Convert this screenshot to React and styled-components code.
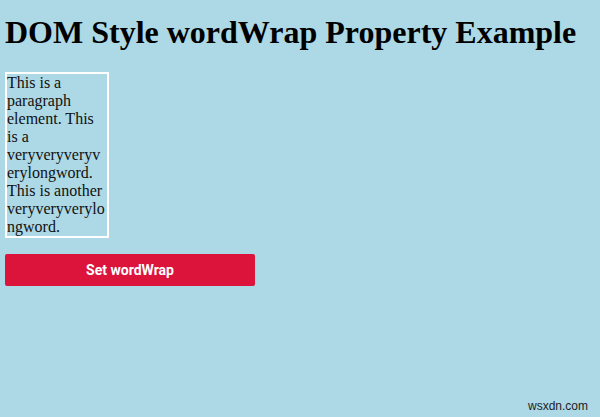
import React from "react";
import styled, { createGlobalStyle } from "styled-components";

const GlobalStyle = createGlobalStyle`
  html, body {
    margin: 0;
    padding: 0;
    background: #add8e6;
  }
  body {
    font-family: "Liberation Serif", "Times New Roman", serif;
    color: #000;
  }
`;

const Page = styled.div`
  position: relative;
  min-height: 417px;
  padding: 14px 5px 0;
  box-sizing: border-box;
`;

const Title = styled.h1`
  margin: 0 0 21px;
  font-size: 32px;
  font-weight: bold;
  line-height: normal;
`;

const WrapBox = styled.p`
  width: 100px;
  margin: 0 0 16px;
  border: 2px solid #fff;
  font-size: 16px;
  line-height: 18px;
  color: #111;
  overflow-wrap: ${(p) => p.$wrap};
  word-wrap: ${(p) => p.$wrap};
`;

const ActionButton = styled.button`
  display: block;
  width: 250px;
  height: 32px;
  border: none;
  border-radius: 2px;
  background: #dc143c;
  color: #fff;
  font-family: Roboto, "Liberation Sans", Arial, sans-serif;
  font-weight: bold;
  font-size: 14px;
  cursor: pointer;
`;

const Watermark = styled.span`
  position: absolute;
  right: 12px;
  bottom: 4px;
  font-family: "Liberation Sans", Arial, sans-serif;
  font-size: 12px;
  color: #222;
`;

export default function App() {
  const [wrap, setWrap] = React.useState("break-word");
  return (
    <>
      <GlobalStyle />
      <Page>
        <Title>DOM Style wordWrap Property Example</Title>
        <WrapBox $wrap={wrap}>
          This is a paragraph element. This is a veryveryveryverylongword.
          This is another veryveryverylongword.
        </WrapBox>
        <ActionButton onClick={() => setWrap("break-word")}>Set wordWrap</ActionButton>
        <Watermark>wsxdn.com</Watermark>
      </Page>
    </>
  );
}
